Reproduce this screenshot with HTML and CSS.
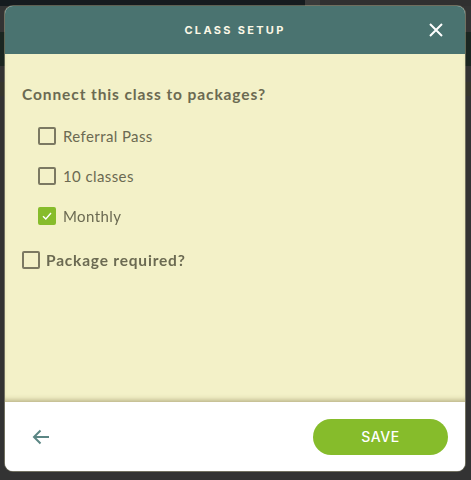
FILE: index.html
```html
<!DOCTYPE html>
<html lang="en">
<head>
    <meta charset="UTF-8">
    <title>Class setup</title>
    <meta name="viewport" content="width=device-width, initial-scale=1.0">
    <link rel="stylesheet" href="styles.css">
</head>
<body>
    <div class="page">
        <div class="topbar"></div>
        <div class="page-row dark"></div>
        <div class="page-row olive"></div>
    </div>

    <div class="modal">
        <div class="modal-head">
            <div class="modal-title">CLASS SETUP</div>
            <button class="close" aria-label="Close">
                <svg width="14" height="14" viewBox="0 0 14 14"><path d="M1 1L13 13M13 1L1 13" stroke="#fff" stroke-width="2" fill="none"/></svg>
            </button>
        </div>
        <div class="modal-body">
            <div class="question">Connect this class to packages?</div>
            <div class="options">
                <label class="check"><span class="box"></span>Referral Pass</label>
                <label class="check"><span class="box"></span>10 classes</label>
                <label class="check"><span class="box on">
                    <svg width="12" height="12" viewBox="0 0 12 12"><path d="M2 6.2L4.8 9L10 3" stroke="#fff" stroke-width="1.4" fill="none"/></svg>
                </span>Monthly</label>
            </div>
            <label class="check strong"><span class="box"></span>Package required?</label>
        </div>
        <div class="modal-foot">
            <button class="back" aria-label="Back">
                <svg width="18" height="16" viewBox="0 0 18 16"><path d="M17 8H2M8.5 1.5L2 8l6.5 6.5" stroke="#5b8684" stroke-width="2" fill="none"/></svg>
            </button>
            <button class="save">SAVE</button>
        </div>
    </div>
</body>
</html>
```

FILE: styles.css
```css
body { margin: 0; background: #333333; font-family: 'Lato', 'Noto Sans', Arial, sans-serif; height: 480px; overflow: hidden; }
.topbar { height: 6px; background: linear-gradient(90deg, #151b1f 0 305px, #3a3a3a 305px 320px, #303030 320px); }
.page-row { height: 34px; margin: 26px 0 0 0; background: #1b2621; }
.page-row.olive { background: #35352c; height: 14px; margin-top: 16px; }

.modal { position: fixed; left: 5px; top: 6px; width: 460px; height: 465px; border-radius: 8px; overflow: hidden; display: flex; flex-direction: column; background: #fff; box-shadow: 0 0 0 1px rgba(230,226,180,0.35); }
.modal-head { height: 48px; background: #4a7370; display: flex; align-items: center; justify-content: center; position: relative; }
.modal-title { font-family: 'Inter', 'Lato', sans-serif; font-weight: 700; font-size: 11px; letter-spacing: 2.3px; color: #fbf8e6; }
.close { position: absolute; right: 22px; top: 17px; background: none; border: 0; padding: 0; width: 14px; height: 14px; display: flex; }

.modal-body { flex: 1; background: #f3f1c8; padding: 31px 17px 0 17px; color: #6b6a52; box-shadow: inset 0 -5px 5px -3px rgba(110,100,50,0.45); }
.question { font-weight: 700; font-size: 15.5px; letter-spacing: 0.9px; margin-bottom: 24px; }
.options { padding-left: 16px; display: flex; flex-direction: column; gap: 22px; margin-bottom: 26px; }
.check { display: flex; align-items: center; gap: 7px; font-size: 15px; letter-spacing: 0.4px; height: 18px; }
.check.strong { font-weight: 700; font-size: 15.5px; letter-spacing: 0.8px; gap: 6px; }
.box { width: 14px; height: 14px; border: 2px solid #7b7962; border-radius: 2px; display: flex; align-items: center; justify-content: center; }
.box.on { background: #86bc2b; border-color: #86bc2b; }

.modal-foot { height: 69px; background: #fff; display: flex; align-items: center; justify-content: space-between; padding: 0 17px 0 27px; }
.back { background: none; border: 0; padding: 0; display: flex; }
.save { width: 135px; height: 36px; border-radius: 18px; border: 0; background: #86bc2b; color: #fff; font-family: 'Inter', 'Lato', sans-serif; font-weight: 500; font-size: 14px; letter-spacing: 0.6px; }
```
